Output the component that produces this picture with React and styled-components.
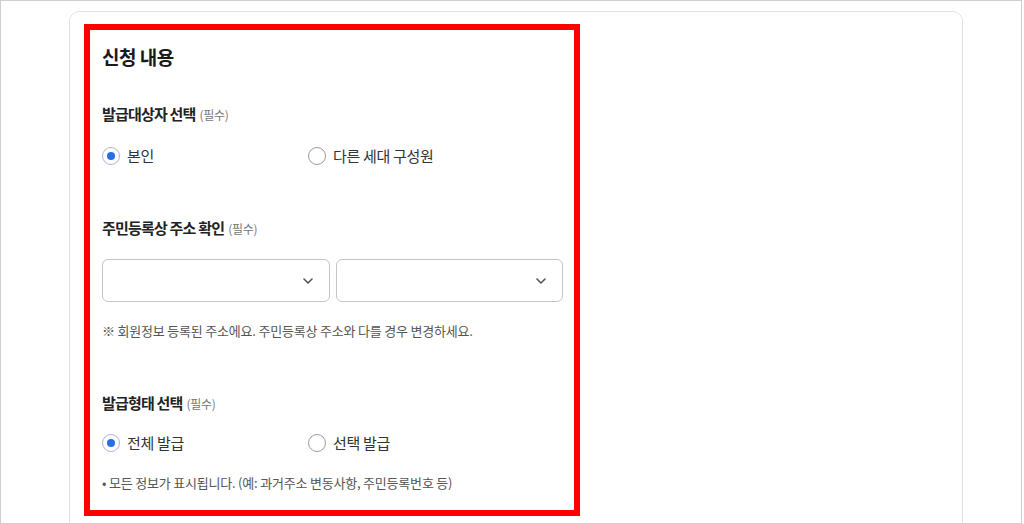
import styled, { createGlobalStyle } from "styled-components";

const GlobalStyle = createGlobalStyle`
  html, body {
    margin: 0;
    padding: 0;
    background: #fff;
  }
  body {
    font-family: "Noto Sans CJK KR", "Noto Sans", sans-serif;
    color: #222;
  }
`;

const Frame = styled.div`
  box-sizing: border-box;
  width: 1022px;
  height: 524px;
  border: 1px solid #cfcfcf;
  overflow: hidden;
  background: #fff;
`;

const Card = styled.div`
  box-sizing: border-box;
  width: 894px;
  height: 530px;
  margin: 10px 0 0 68px;
  padding: 12px 14px;
  border: 1px solid #e2e2e2;
  border-radius: 10px;
`;

const Highlight = styled.section`
  box-sizing: border-box;
  width: 496px;
  border: 6px solid #fe0000;
  padding: 0 11px 18px 12px;
`;

const Title = styled.h2`
  margin: 15px 0 0;
  font-size: 19px;
  line-height: 24px;
  font-weight: 700;
  letter-spacing: -0.5px;
  color: #1a1a1a;
`;

const Field = styled.div`
  margin-top: ${(p) => p.$top}px;
`;

const Label = styled.div`
  font-size: 15px;
  line-height: 20px;
  font-weight: 700;
  letter-spacing: -0.8px;
  color: #222;
`;

const Required = styled.span`
  margin-left: 4px;
  font-size: 12px;
  font-weight: 400;
  letter-spacing: -0.3px;
  color: #777;
`;

const RadioRow = styled.div`
  display: grid;
  grid-template-columns: 206px 1fr;
  margin-top: ${(p) => p.$top}px;
`;

const RadioOption = styled.label`
  display: flex;
  align-items: center;
  gap: 7px;
  height: 20px;
  font-size: 15px;
  line-height: 20px;
  letter-spacing: -0.3px;
  color: #333;
`;

const RadioCircle = styled.span`
  box-sizing: border-box;
  display: flex;
  align-items: center;
  justify-content: center;
  width: 18px;
  height: 18px;
  border-radius: 50%;
  border: 1px solid ${(p) => (p.$checked ? "#a8b6da" : "#9a9a9a")};
  background: #fff;

  &::after {
    content: "";
    display: ${(p) => (p.$checked ? "block" : "none")};
    width: 8px;
    height: 8px;
    border-radius: 50%;
    background: #2b6de6;
  }
`;

const SelectRow = styled.div`
  display: grid;
  grid-template-columns: 1fr 1fr;
  gap: 6px;
  margin-top: 20px;
`;

const SelectBox = styled.div`
  box-sizing: border-box;
  display: flex;
  align-items: center;
  justify-content: flex-end;
  height: 43px;
  padding-right: 16px;
  border: 1px solid #c4c4c4;
  border-radius: 6px;
  background: #fff;
`;

const Note = styled.p`
  margin: ${(p) => p.$top}px 0 0;
  font-size: 13px;
  line-height: 18px;
  letter-spacing: -0.2px;
  color: #555;
`;

const Chevron = () => (
  <svg width="10" height="6" viewBox="0 0 10 6" fill="none">
    <polyline
      points="1,1 5,5 9,1"
      stroke="#555"
      strokeWidth="1.6"
      strokeLinecap="round"
      strokeLinejoin="round"
    />
  </svg>
);

const Radio = ({ checked, children }) => (
  <RadioOption>
    <RadioCircle $checked={checked} />
    {children}
  </RadioOption>
);

const App = () => {
  return (
    <Frame>
      <GlobalStyle />
      <Card>
        <Highlight>
          <Title>신청 내용</Title>

          <Field $top={35}>
            <Label>
              발급대상자 선택<Required>(필수)</Required>
            </Label>
            <RadioRow $top={21}>
              <Radio checked>본인</Radio>
              <Radio>다른 세대 구성원</Radio>
            </RadioRow>
          </Field>

          <Field $top={52}>
            <Label>
              주민등록상 주소 확인<Required>(필수)</Required>
            </Label>
            <SelectRow>
              <SelectBox>
                <Chevron />
              </SelectBox>
              <SelectBox>
                <Chevron />
              </SelectBox>
            </SelectRow>
            <Note $top={20}>
              ※ 회원정보 등록된 주소에요. 주민등록상 주소와 다를 경우 변경하세요.
            </Note>
          </Field>

          <Field $top={53}>
            <Label>
              발급형태 선택<Required>(필수)</Required>
            </Label>
            <RadioRow $top={19}>
              <Radio checked>전체 발급</Radio>
              <Radio>선택 발급</Radio>
            </RadioRow>
            <Note $top={21}>
              • 모든 정보가 표시됩니다. (예: 과거주소 변동사항, 주민등록번호 등)
            </Note>
          </Field>
        </Highlight>
      </Card>
    </Frame>
  );
};

export default App;
